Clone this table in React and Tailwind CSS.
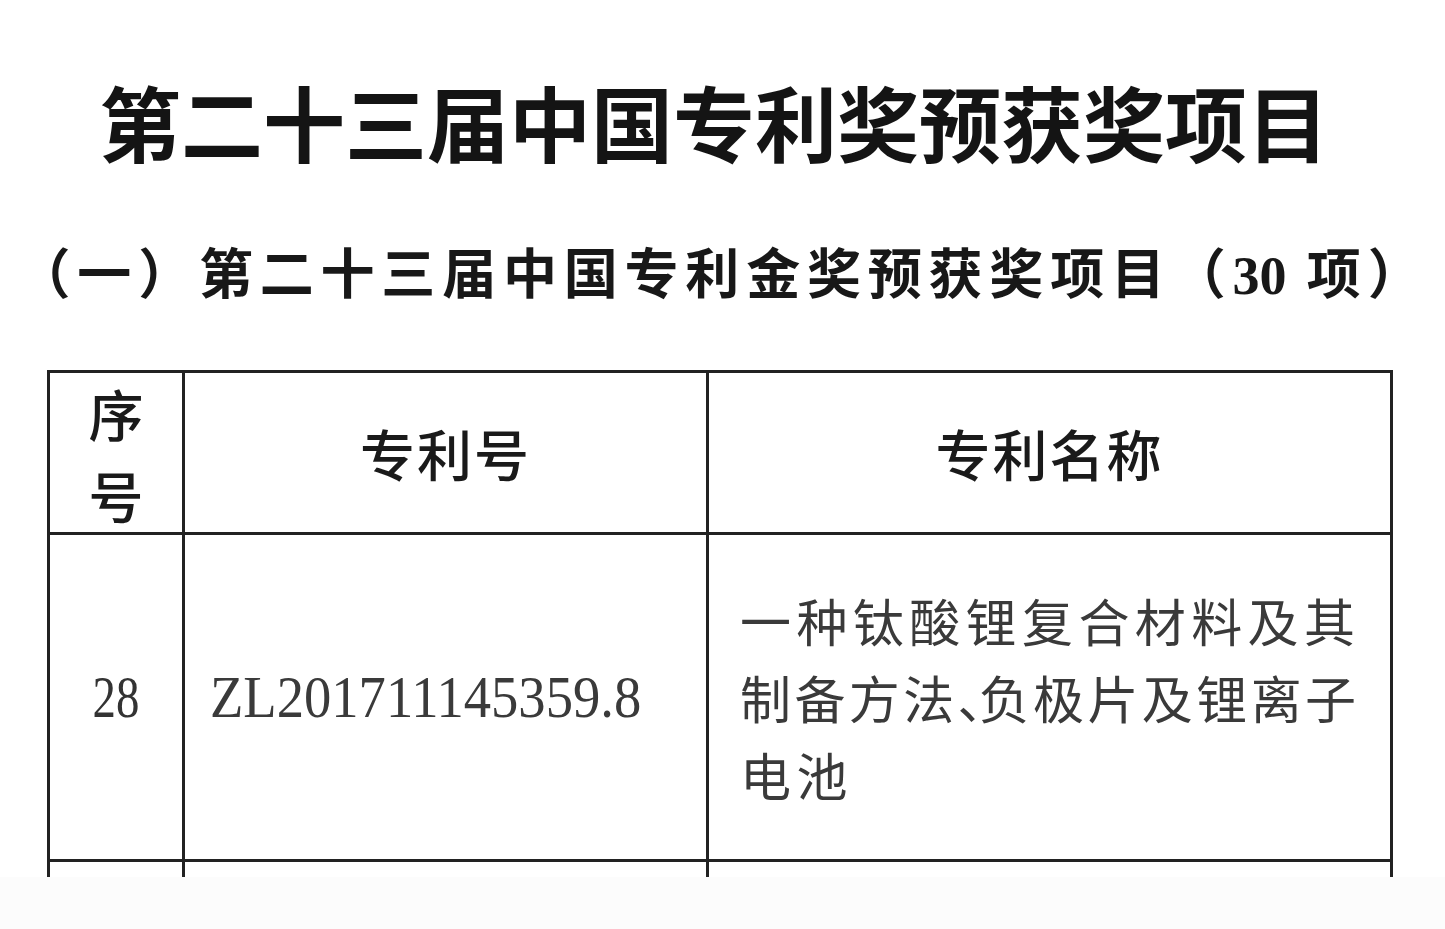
import React from "react";

const serif = { fontFamily: '"Liberation Serif", "Noto Sans CJK SC", serif' };
const cjk = { fontFamily: '"Noto Sans CJK SC", "Noto Sans", sans-serif' };

export default function App() {
  return (
    <div className="w-[1445px] h-[929px] bg-white flex flex-col overflow-hidden">
      <div className="h-[877px] overflow-hidden flex flex-col">
        <div
          className="mt-[88px] h-[100px] pr-[17px] flex items-center justify-center text-[82px] font-bold leading-none text-[#141414] [text-spacing-trim:space-all]"
          style={serif}
        >
          第二十三届中国专利奖预获奖项目
        </div>
        <div
          className="mt-[79px] h-[70px] flex items-center justify-center text-[54px] font-semibold leading-none text-[#181818] tracking-[6.8px] [text-spacing-trim:space-all]"
          style={serif}
        >
          （一）第二十三届中国专利金奖预获奖项目（<span className="font-bold tracking-[0px]">30</span>&nbsp;项）
        </div>
        <div className="mt-[67px] ml-[47px] w-[1346px] bg-[#222] p-[3px] pb-0 grid grid-cols-[132px_521px_681px] grid-rows-[159px_324px_40px] gap-[3px]">
          <div className="bg-white flex items-center justify-center">
            <div className="text-[55px] leading-[82px] font-medium text-[#1a1a1a] text-center" style={cjk}>
              <div>序</div>
              <div>号</div>
            </div>
          </div>
          <div className="bg-white flex items-center justify-center">
            <span className="text-[55px] font-medium tracking-[2px] text-[#1a1a1a] leading-none" style={cjk}>
              专利号
            </span>
          </div>
          <div className="bg-white flex items-center justify-center">
            <span className="text-[55px] font-medium tracking-[2px] text-[#1a1a1a] leading-none" style={cjk}>
              专利名称
            </span>
          </div>

          <div className="bg-white flex items-center justify-center">
            <span className="inline-block text-[60px] leading-none text-[#333] scale-x-[0.78]" style={serif}>
              28
            </span>
          </div>
          <div className="bg-white flex items-center pl-[25px]">
            <span className="inline-block origin-left text-[60px] leading-none text-[#3a3a3a] scale-x-[0.91]" style={serif}>
              ZL201711145359.8
            </span>
          </div>
          <div className="bg-white flex items-center pl-[31px]">
            <div className="text-[51px] leading-[77px] text-[#3a3a3a] whitespace-nowrap [text-spacing-trim:space-all]" style={cjk}>
              <div className="tracking-[5.4px]">一种钛酸锂复合材料及其</div>
              <div className="tracking-[3.4px]">
                制备方法<span className="tracking-[-30px]">、</span>负极片及锂离子
              </div>
              <div className="tracking-[5.4px]">电池</div>
            </div>
          </div>

          <div className="bg-white"></div>
          <div className="bg-white"></div>
          <div className="bg-white"></div>
        </div>
      </div>
      <div className="flex-1 bg-[#fcfcfc]"></div>
    </div>
  );
}
